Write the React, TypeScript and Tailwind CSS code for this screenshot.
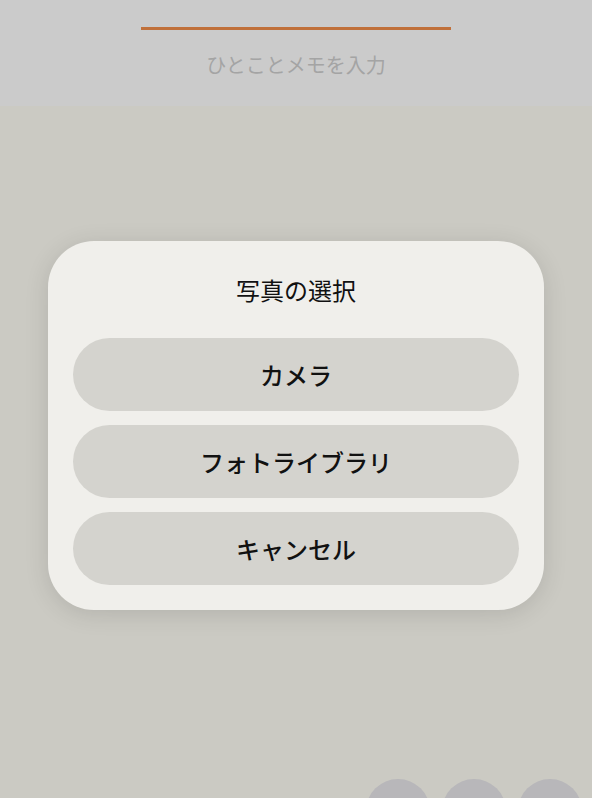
export default function App() {
  const actions = ["カメラ", "フォトライブラリ", "キャンセル"]

  return (
    <div
      className="relative h-[798px] w-full overflow-hidden bg-[#cbcac3]"
      style={{ fontFamily: '"Noto Sans CJK JP", "Noto Sans", sans-serif' }}
    >
      {/* Memo field */}
      <div className="flex h-[106px] flex-col items-center bg-[#cbcbcb] pt-[27px]">
        <div className="h-[3px] w-[310px] bg-[#c0703a]" />
        <div className="mt-[22px] text-[20px] leading-[26px] text-[#a4a4a4]">ひとことメモを入力</div>
      </div>

      {/* Dialog */}
      <div className="flex justify-center pt-[135px]">
        <div className="flex w-[496px] flex-col rounded-[46px] bg-[#f0efeb] px-[25px] pb-[25px] shadow-[0_4px_24px_rgba(0,0,0,0.12)]">
          <div className="flex h-[97px] items-center justify-center text-[24px] text-[#111]">写真の選択</div>
          <div className="flex flex-col gap-[14px]">
            {actions.map((a) => (
              <button
                key={a}
                className="flex h-[73px] items-center justify-center rounded-full bg-[#d4d3ce] text-[24px] font-medium text-[#111]"
              >
                {a}
              </button>
            ))}
          </div>
        </div>
      </div>

      {/* Bottom toolbar, cut off */}
      <div className="absolute left-[366px] top-[779px] flex gap-[12px]">
        <div className="h-[64px] w-[64px] rounded-full bg-[#b8b7ba]" />
        <div className="h-[64px] w-[64px] rounded-full bg-[#b8b7ba]" />
        <div className="h-[64px] w-[64px] rounded-full bg-[#b8b7ba]" />
      </div>
    </div>
  )
}
